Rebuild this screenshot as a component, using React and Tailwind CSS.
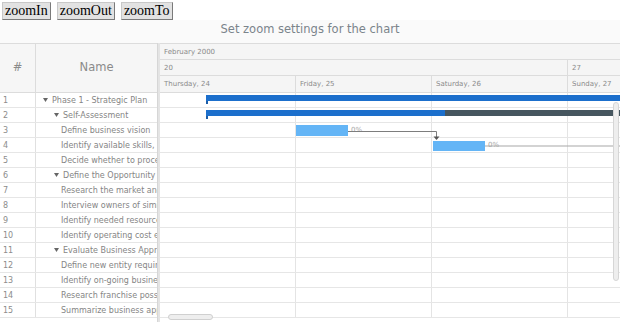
const rows = [
  { n: 1, name: 'Phase 1 - Strategic Plan', level: 0, parent: true },
  { n: 2, name: 'Self-Assessment', level: 1, parent: true },
  { n: 3, name: 'Define business vision', level: 2 },
  { n: 4, name: 'Identify available skills, information and support', level: 2 },
  { n: 5, name: 'Decide whether to proceed', level: 2 },
  { n: 6, name: 'Define the Opportunity', level: 1, parent: true },
  { n: 7, name: 'Research the market and competition', level: 2 },
  { n: 8, name: 'Interview owners of similar businesses', level: 2 },
  { n: 9, name: 'Identify needed resources', level: 2 },
  { n: 10, name: 'Identify operating cost elements', level: 2 },
  { n: 11, name: 'Evaluate Business Approach', level: 1, parent: true },
  { n: 12, name: 'Define new entity requirements', level: 2 },
  { n: 13, name: 'Identify on-going business purchase opportunities', level: 2 },
  { n: 14, name: 'Research franchise possibilities', level: 2 },
  { n: 15, name: 'Summarize business approach', level: 2 },
];

const days = ['Thursday, 24', 'Friday, 25', 'Saturday, 26', 'Sunday, 27'];

function Caret() {
  return (
    <svg width="5" height="4" viewBox="0 0 5 4" className="shrink-0 -mt-[2px]">
      <path d="M0 0 L5 0 L2.5 4 Z" fill="#666" />
    </svg>
  );
}

function NameCell({ row }) {
  if (row.level === 0) {
    return (
      <div className="flex items-center pl-[7px] gap-[4px]">
        <Caret />
        <span>{row.name}</span>
      </div>
    );
  }
  if (row.parent) {
    return (
      <div className="flex items-center pl-[18px] gap-[4px]">
        <Caret />
        <span>{row.name}</span>
      </div>
    );
  }
  return <div className="pl-[25px]">{row.name}</div>;
}

function DayCells() {
  return (
    <div className="flex h-full">
      {days.map((d) => (
        <div key={d} className="w-[136px] shrink-0 h-full border-r border-[#e4e4e4]" />
      ))}
    </div>
  );
}

export default function App() {
  return (
    <div className="w-[620px] h-[322px] overflow-hidden bg-white relative font-['DejaVu_Sans',sans-serif]">
      <div className="flex gap-[6px] pl-[2px] pt-[2px] h-[20px]">
        {['zoomIn', 'zoomOut', 'zoomTo'].map((b) => (
          <button
            key={b}
            className="h-[18px] px-[2px] bg-[#e2e2e2] border border-[#c8c8c8] border-r-[#7a7a7a] border-b-[#7a7a7a] font-['Liberation_Serif',serif] text-[14px] leading-[14px] text-black"
          >
            {b}
          </button>
        ))}
      </div>

      <div className="h-[23px] bg-[#fafafa] flex justify-center pt-[2px] text-[11.5px] leading-[14px] text-[#7b848b]">
        Set zoom settings for the chart
      </div>

      <div className="flex h-[279px]">
        {/* data grid */}
        <div className="w-[157px] shrink-0 overflow-hidden">
          <div className="flex h-[50px] bg-[#f6f6f6] border-y border-[#dcdcdc] text-[11.5px] text-[#8a8a8a]">
            <div className="w-[36px] shrink-0 border-r border-[#dcdcdc] flex items-center justify-center">#</div>
            <div className="flex-1 flex items-center justify-center">Name</div>
          </div>
          {rows.map((r) => (
            <div key={r.n} className="flex h-[15px] border-b border-[#e6e6e6] text-[8px] leading-[16px] text-[#858585] whitespace-nowrap">
              <div className="w-[36px] shrink-0 border-r border-[#e0e0e0] pl-[3px] text-[#8c8c8c]">{r.n}</div>
              <div className="flex-1 overflow-hidden">
                <NameCell row={r} />
              </div>
            </div>
          ))}
        </div>

        {/* splitter */}
        <div className="w-[3px] shrink-0 bg-[#e4e4e4] border-l border-[#d6d6d6]" />

        {/* timeline */}
        <div className="flex-1 overflow-hidden relative">
          <div className="h-[50px] bg-[#f5f5f5] border-y border-[#dcdcdc] text-[7px] text-[#8a8a8a] whitespace-nowrap">
            <div className="h-[16px] border-b border-[#dcdcdc] pl-[4px] leading-[17px]">February 2000</div>
            <div className="h-[16px] border-b border-[#dcdcdc] flex leading-[16px]">
              <div className="w-[408px] shrink-0 border-r border-[#dcdcdc] pl-[4px]">20</div>
              <div className="pl-[4px]">27</div>
            </div>
            <div className="h-[16px] flex leading-[16px]">
              {days.map((d) => (
                <div key={d} className="w-[136px] shrink-0 border-r border-[#dcdcdc] pl-[4px]">{d}</div>
              ))}
            </div>
          </div>

          <div className="relative">
            {rows.map((r) => (
              <div key={r.n} className="relative h-[15px] border-b border-[#e6e6e6]">
                <DayCells />
                {r.n === 1 && (
                  <>
                    <div className="absolute left-[46px] top-[2px] h-[6px] w-[420px] bg-[#1c6fcc]" />
                    <div className="absolute left-[46px] top-[8px] h-[3px] w-[2px] bg-[#1c5ea8]" />
                  </>
                )}
                {r.n === 2 && (
                  <>
                    <div className="absolute left-[46px] top-[2px] h-[6px] w-[239px] bg-[#1c6fcc]" />
                    <div className="absolute left-[285px] top-[2px] h-[6px] w-[180px] bg-[#46565f]" />
                    <div className="absolute left-[46px] top-[8px] h-[3px] w-[2px] bg-[#1c5ea8]" />
                  </>
                )}
                {r.n === 3 && (
                  <>
                    <div className="absolute left-[136px] top-[2px] h-[11px] w-[52px] bg-[#64b5f6]" />
                    <div className="absolute left-[191px] top-0 text-[7px] leading-[14px] text-[#a6a6a6]">0%</div>
                  </>
                )}
                {r.n === 4 && (
                  <>
                    <div className="absolute left-[273px] top-[3px] h-[10px] w-[52px] bg-[#64b5f6]" />
                    <div className="absolute left-[328px] top-0 text-[7px] leading-[14px] text-[#a6a6a6]">0%</div>
                  </>
                )}
              </div>
            ))}

            <svg className="absolute left-0 top-0" width="460" height="230">
              <path d="M188 38.5 H276.5 V44" stroke="#7d7d7d" strokeWidth="1" fill="none" />
              <path d="M273.5 43.5 H279.5 L276.5 47 Z" fill="#555" />
              <path d="M325 53 H460" stroke="#a8a8a8" strokeWidth="1.2" fill="none" />
            </svg>
          </div>

          {/* scrollbars */}
          <div className="absolute right-[1px] top-[59px] h-[179px] w-[6px] rounded-full bg-[#eeeeee] border border-[#d6d6d6]" />
          <div className="absolute left-[8px] top-[271px] h-[6px] w-[45px] rounded-full bg-[#eeeeee] border border-[#d0d0d0]" />
        </div>
      </div>
    </div>
  );
}
